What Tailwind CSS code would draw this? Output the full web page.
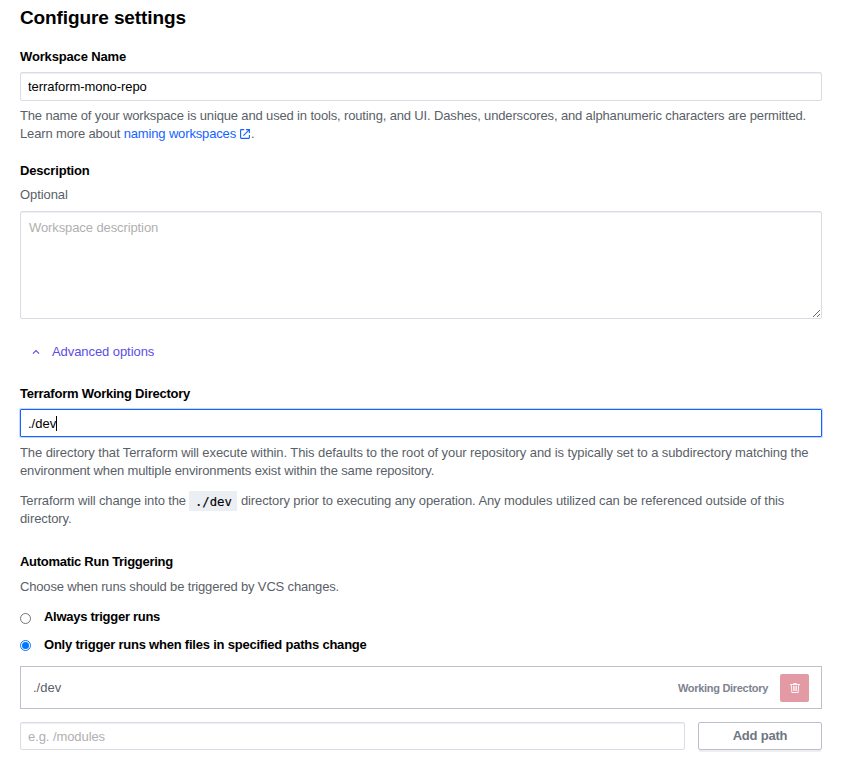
<!DOCTYPE html>
<html lang="en">
<head>
<meta charset="utf-8">
<title>Configure settings</title>
<script src="https://cdn.jsdelivr.net/npm/@tailwindcss/browser@4"></script>
</head>
<body class="bg-white">
<main class="flex h-[760px] w-[842px] flex-col overflow-hidden pt-[6px] pr-[20px] pl-[20px] font-['Liberation_Sans',Arial,sans-serif] text-[13px] leading-[18px] text-[#5a5f69]">
  <h1 class="h-[24px] text-[19px] leading-[24px] font-bold tracking-[-0.11px] text-black">Configure settings</h1>

  <label class="mt-[18px] font-bold tracking-[-0.15px] text-black">Workspace Name</label>
  <input type="text" value="terraform-mono-repo" class="mt-[6px] h-[29px] shrink-0 rounded-[2px] border border-[#dcdce6] px-[7px] tracking-[-0.06px] text-black shadow-[inset_0_1px_1px_#ededf2] outline-none">
  <p class="mt-[6px] tracking-[-0.15px] whitespace-nowrap">The name of your workspace is unique and used in tools, routing, and UI. Dashes, underscores, and alphanumeric characters are permitted.<br>Learn more about <a class="text-[#1563ff]">naming workspaces <svg class="mr-[1.5px] inline-block h-[10px] w-[10px] align-[-1px]" viewBox="0 0 10 10" fill="none" stroke="currentColor" stroke-width="1.1"><path d="M4.2.6H1.2Q.6.6.6 1.2v7.6q0 .6.6.6h7.6q.6 0 .6-.6V6M6 .6h3.4V4M9.2.8 3.4 6.6"/></svg></a>.</p>

  <label class="mt-[19px] font-bold tracking-[-0.18px] text-black">Description</label>
  <p class="mt-[6px] tracking-[-0.08px]">Optional</p>
  <textarea placeholder="Workspace description" class="mt-[7px] h-[108px] shrink-0 resize-y rounded-[2px] border border-[#dcdce6] px-[8px] py-[7px] tracking-[-0.1px] shadow-[inset_0_1px_1px_#ededf2] outline-none placeholder:text-[#b0b0b0]"></textarea>

  <div class="mt-[24px] flex items-center gap-[12px] pl-[12px] tracking-[-0.07px] text-[#5c4ee5]">
    <svg class="h-[8px] w-[8px]" viewBox="0 0 8 8" fill="none" stroke="currentColor" stroke-width="1.1"><path d="M.9 5.7 4 2.6l3.1 3.1"/></svg>
    <span>Advanced options</span>
  </div>

  <label class="mt-[24px] font-bold tracking-[-0.24px] text-black">Terraform Working Directory</label>
  <div class="mt-[6px] flex h-[28px] shrink-0 items-center rounded-[1px] border border-[#1563ff] px-[7px] pt-px text-black shadow-[0_0_0_1px_#c5d8ff]"><span>./dev</span><span class="h-[15px] w-px bg-black"></span></div>
  <p class="mt-[7px] whitespace-nowrap"><span class="tracking-[-0.09px]">The directory that Terraform will execute within. This defaults to the root of your repository and is typically set to a subdirectory matching the</span><br><span class="tracking-[-0.135px]">environment when multiple environments exist within the same repository.</span></p>
  <p class="mt-[12px] h-[36px] tracking-[-0.105px] whitespace-nowrap"><span class="tracking-[-0.13px]">Terraform will change into the </span><code class="bg-[#ebeef2] px-[5.5px] pt-[4px] pb-[2px] align-[-1px] font-['DejaVu_Sans_Mono',monospace] text-[12.3px] leading-none tracking-normal text-black [-webkit-text-stroke:0.15px]">./dev</code> directory prior to executing any operation. Any modules utilized can be referenced outside of this<br>directory.</p>

  <h2 class="mt-[25px] font-bold tracking-[-0.28px] text-black">Automatic Run Triggering</h2>
  <p class="mt-[7px] tracking-[-0.16px]">Choose when runs should be triggered by VCS changes.</p>
  <label class="mt-[12px] flex gap-[13px] font-bold tracking-[-0.28px] text-black"><span class="mt-[5px] h-[11px] w-[11px] rounded-full border border-[#767676]"></span>Always trigger runs</label>
  <label class="mt-[10px] flex gap-[13px] font-bold tracking-[-0.22px] text-black"><span class="mt-[4px] flex h-[11px] w-[11px] items-center justify-center rounded-full border border-[#0075ff]"><span class="h-[7px] w-[7px] rounded-full bg-[#0075ff]"></span></span>Only trigger runs when files in specified paths change</label>

  <div class="mt-[12px] flex h-[43px] shrink-0 items-center border border-[#bac1cc] pr-[12px] pl-[12px]">
    <span>./dev</span>
    <span class="ml-auto text-[11px] font-bold tracking-[-0.3px] text-[#7d838f]">Working Directory</span>
    <button class="ml-[12px] flex h-[28px] w-[29px] items-center justify-center rounded-[2px] bg-[#e39aa4] text-white">
      <svg class="h-[10px] w-[10px]" viewBox="0 0 10 10" fill="none" stroke="currentColor" stroke-width=".9"><path d="M0 1.5h10M3.5 1.3V.5h3v.8M1.3 2l.5 7.5h6.4L8.7 2M3.5 2.8l.2 5.2M5 2.8V8M6.5 2.8 6.3 8"/></svg>
    </button>
  </div>

  <div class="mt-[13px] flex h-[28px] shrink-0 gap-[13px]">
    <input type="text" placeholder="e.g. /modules" class="h-[28px] w-[665px] rounded-[2px] border border-[#dcdce6] px-[7px] tracking-[-0.08px] shadow-[inset_0_1px_1px_#ededf2] outline-none placeholder:text-[#b0b0b0]">
    <button class="h-[28px] flex-1 rounded-[2px] border border-[#bac1cc] font-bold tracking-[-0.2px] text-[#6f7682] shadow-[0_3px_1px_-1px_#eeeeef]">Add path</button>
  </div>
</main>
</body>
</html>
